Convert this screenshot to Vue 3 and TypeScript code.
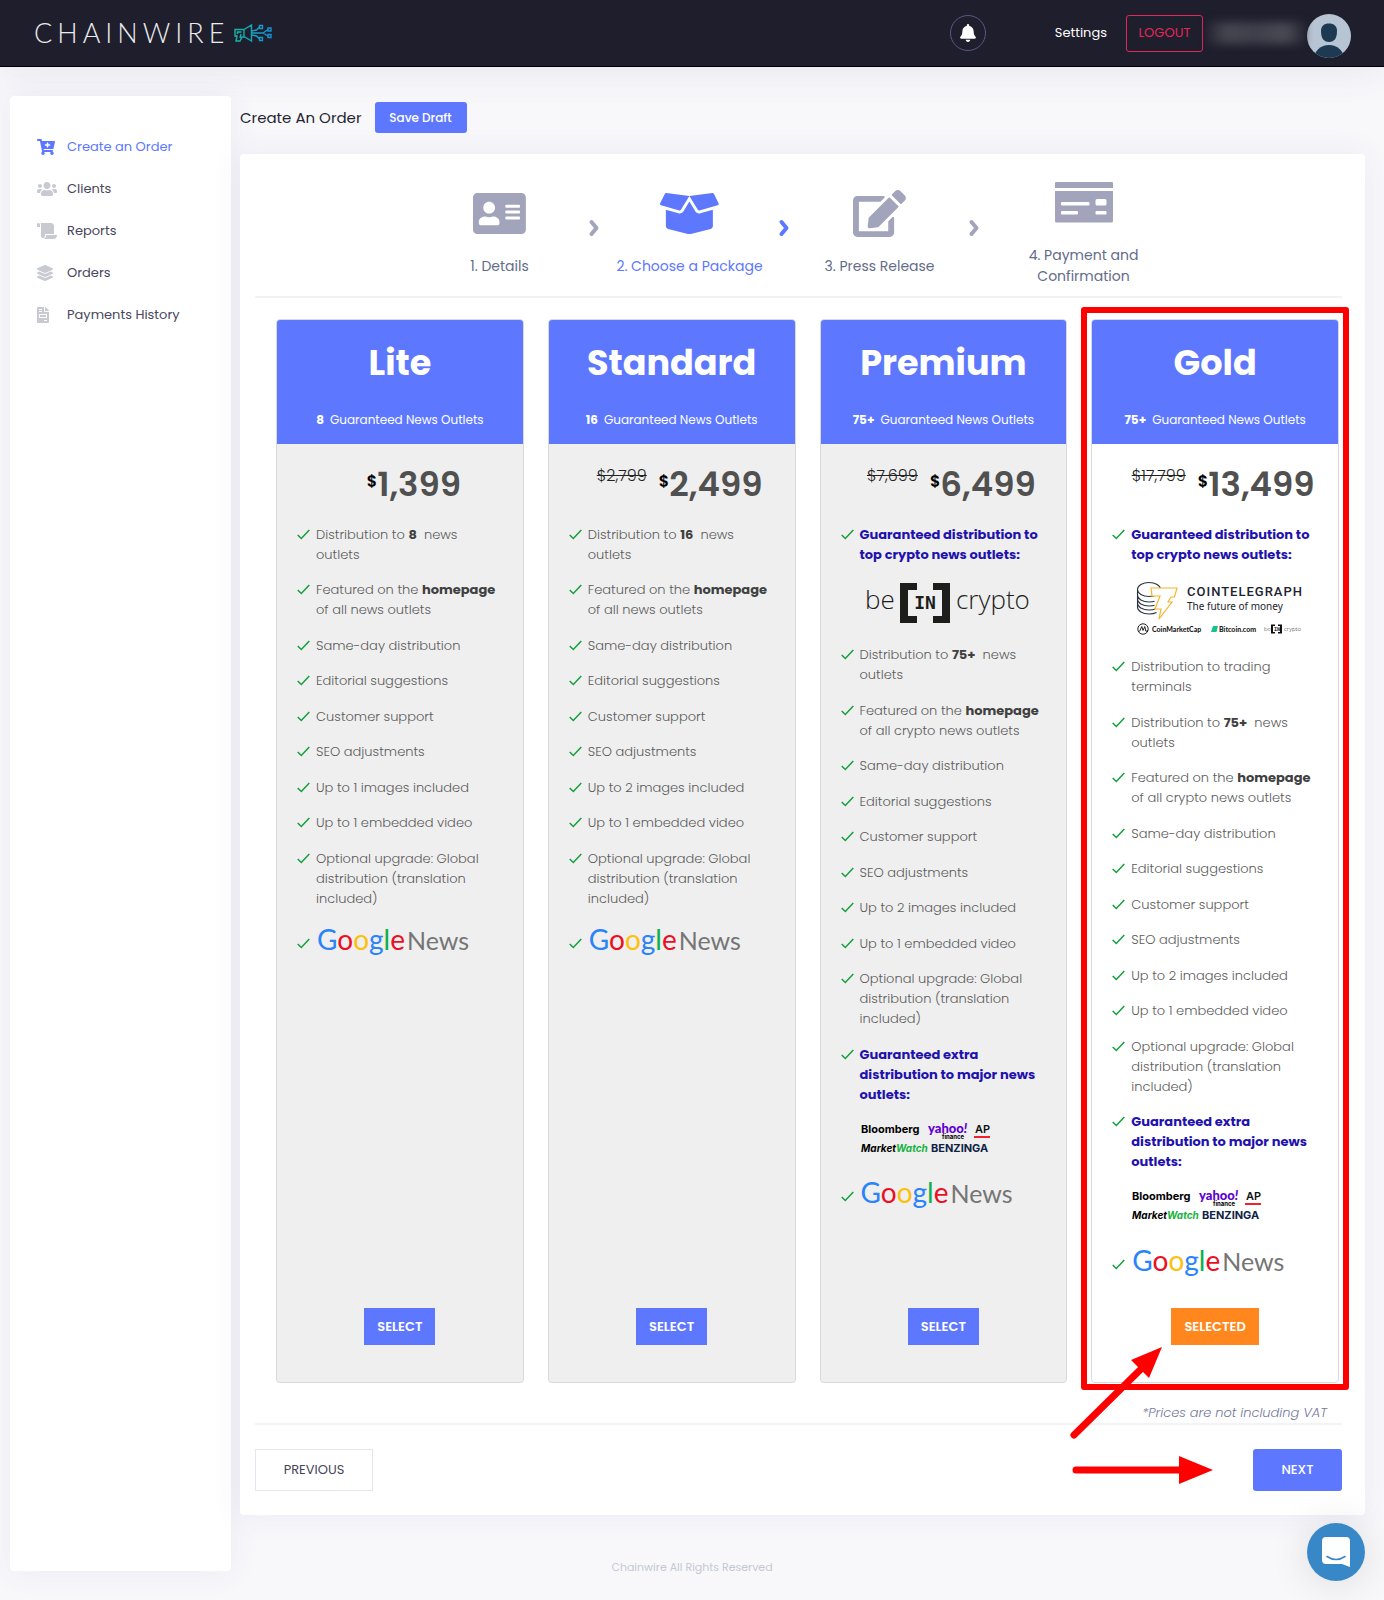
<script setup lang="ts">
interface Icon { w: number; h: number; d: string }
interface Segment { text: string; bold?: boolean }
interface Feature { text?: Segment[]; highlight?: boolean; logos?: 'bein' | 'crypto' | 'major' | 'google' }
interface Plan { name: string; outlets: string; old: string; price: string; selected?: boolean; features: Feature[] }

const menu: { label: string; active?: boolean; icon: Icon }[] = [
  { label: 'Create an Order', active: true, icon: { w: 576, h: 512, d: 'M504.717 320H211.572l6.545 32h268.418c15.401 0 26.816 14.301 23.403 29.319l-5.517 24.276C523.112 414.668 536 433.828 536 456c0 31.202-25.519 56.444-56.824 55.994-29.823-.429-54.35-24.631-55.155-54.447-.44-16.287 6.085-31.049 16.803-41.548H231.176C241.553 426.165 248 440.326 248 456c0 31.813-26.528 57.431-58.67 55.938-28.54-1.325-51.751-24.385-53.251-52.917-1.158-22.034 10.436-41.455 28.051-51.586L93.883 64H24C10.745 64 0 53.255 0 40V24C0 10.745 10.745 0 24 0h102.529c11.401 0 21.228 8.021 23.513 19.19L159.208 64H551.99c15.401 0 26.816 14.301 23.403 29.319l-47.273 208C525.637 312.246 515.923 320 504.717 320zM408 168h-48v-40c0-8.837-7.163-16-16-16h-16c-8.837 0-16 7.163-16 16v40h-48c-8.837 0-16 7.163-16 16v16c0 8.837 7.163 16 16 16h48v40c0 8.837 7.163 16 16 16h16c8.837 0 16-7.163 16-16v-40h48c8.837 0 16-7.163 16-16v-16c0-8.837-7.163-16-16-16z' } },
  { label: 'Clients', icon: { w: 640, h: 512, d: 'M96 224c35.3 0 64-28.7 64-64s-28.7-64-64-64-64 28.7-64 64 28.7 64 64 64zm448 0c35.3 0 64-28.7 64-64s-28.7-64-64-64-64 28.7-64 64 28.7 64 64 64zm32 32h-64c-17.6 0-33.5 7.1-45.1 18.6 40.3 22.1 68.9 62 75.1 109.4h66c17.7 0 32-14.3 32-32v-32c0-35.3-28.7-64-64-64zm-256 0c61.9 0 112-50.1 112-112S381.9 32 320 32 208 82.1 208 144s50.1 112 112 112zm76.8 32h-8.3c-20.8 10-43.9 16-68.5 16s-47.6-6-68.5-16h-8.3C179.6 288 128 339.6 128 403.2V432c0 26.5 21.5 48 48 48h288c26.5 0 48-21.5 48-48v-28.8c0-63.6-51.6-115.2-115.2-115.2zm-223.7-13.4C161.5 263.1 145.6 256 128 256H64c-35.3 0-64 28.7-64 64v32c0 17.7 14.3 32 32 32h65.9c6.3-47.4 34.9-87.3 75.2-109.4z' } },
  { label: 'Reports', icon: { w: 640, h: 512, d: 'M48 0C21.53 0 0 21.53 0 48v64c0 8.84 7.16 16 16 16h80V48C96 21.53 74.47 0 48 0zm208 412.57V352h288V96c0-52.94-43.06-96-96-96H111.59C121.74 13.41 128 29.92 128 48v368c0 38.87 34.65 69.65 74.75 63.12C234.22 474 256 444.46 256 412.57zM288 384v32c0 52.93-43.06 96-96 96h336c61.86 0 112-50.14 112-112 0-8.84-7.16-16-16-16H288z' } },
  { label: 'Orders', icon: { w: 512, h: 512, d: 'M12.41 148.02l232.94 105.67c6.8 3.09 14.49 3.09 21.29 0l232.94-105.67c16.55-7.51 16.55-32.52 0-40.03L266.65 2.31a25.607 25.607 0 0 0-21.29 0L12.41 107.98c-16.55 7.51-16.55 32.53 0 40.04zm487.18 88.28l-58.09-26.33-161.64 73.27c-7.56 3.43-15.59 5.17-23.86 5.17s-16.29-1.74-23.86-5.17L70.51 209.97l-58.1 26.33c-16.55 7.5-16.55 32.5 0 40l232.94 105.59c6.8 3.08 14.49 3.08 21.29 0L499.59 276.3c16.55-7.5 16.55-32.5 0-40zm0 127.8l-57.87-26.23-161.86 73.37c-7.56 3.43-15.59 5.17-23.86 5.17s-16.29-1.74-23.86-5.17L70.29 337.87 12.41 364.1c-16.55 7.5-16.55 32.5 0 40l232.94 105.59c6.8 3.08 14.49 3.08 21.29 0L499.59 404.1c16.55-7.5 16.55-32.5 0-40z' } },
  { label: 'Payments History', icon: { w: 384, h: 512, d: 'M288 256H96v64h192v-64zm89-151L279.1 7c-4.5-4.5-10.6-7-17-7H256v128h128v-6.1c0-6.3-2.5-12.4-7-16.9zm-153 31V0H24C10.7 0 0 10.7 0 24v464c0 13.3 10.7 24 24 24h336c13.3 0 24-10.7 24-24V160H248c-13.2 0-24-10.8-24-24zM64 72c0-4.42 3.58-8 8-8h80c4.42 0 8 3.58 8 8v16c0 4.42-3.58 8-8 8H72c-4.42 0-8-3.58-8-8V72zm0 64c0-4.42 3.58-8 8-8h80c4.42 0 8 3.58 8 8v16c0 4.42-3.58 8-8 8H72c-4.42 0-8-3.58-8-8v-16zm256 304c0 4.42-3.58 8-8 8h-80c-4.42 0-8-3.58-8-8v-16c0-4.42 3.58-8 8-8h80c4.42 0 8 3.58 8 8v16zm0-200v96c0 8.84-7.16 16-16 16H80c-8.84 0-16-7.16-16-16v-96c0-8.84 7.16-16 16-16h224c8.84 0 16 7.16 16 16z' } }
]

const steps: { label: string; active?: boolean; wide?: boolean; icon: Icon }[] = [
  { label: '1. Details', icon: { w: 576, h: 512, d: 'M528 32H48C21.5 32 0 53.5 0 80v352c0 26.5 21.5 48 48 48h480c26.5 0 48-21.5 48-48V80c0-26.5-21.5-48-48-48zm-352 96c35.3 0 64 28.7 64 64s-28.7 64-64 64-64-28.7-64-64 28.7-64 64-64zm112 236.8c0 10.6-10 19.2-22.4 19.2H86.4C74 384 64 375.4 64 364.8v-19.2c0-31.8 30.1-57.6 67.2-57.6h5c12.3 5.1 25.7 8 39.8 8s27.6-2.9 39.8-8h5c37.1 0 67.2 25.8 67.2 57.6v19.2zM512 312c0 4.4-3.6 8-8 8H360c-4.4 0-8-3.6-8-8v-16c0-4.4 3.6-8 8-8h144c4.4 0 8 3.6 8 8v16zm0-64c0 4.4-3.6 8-8 8H360c-4.4 0-8-3.6-8-8v-16c0-4.4 3.6-8 8-8h144c4.4 0 8 3.6 8 8v16zm0-64c0 4.4-3.6 8-8 8H360c-4.4 0-8-3.6-8-8v-16c0-4.4 3.6-8 8-8h144c4.4 0 8 3.6 8 8v16z' } },
  { label: '2. Choose a Package', active: true, icon: { w: 640, h: 512, d: 'M425.7 256c-16.9 0-32.8-9-41.4-23.4L320 126l-64.2 106.6c-8.7 14.5-24.6 23.5-41.5 23.5-4.5 0-9-.6-13.3-1.9L64 215v178c0 14.7 10 27.5 24.2 31l216.2 54.1c10.2 2.5 20.9 2.5 31 0L551.8 424c14.2-3.6 24.2-16.4 24.2-31V215l-137 39.1c-4.3 1.3-8.8 1.9-13.3 1.9zm212.6-112.2L586.8 41c-3.1-6.2-9.8-9.8-16.7-8.9L320 64l91.7 152.1c3.8 6.3 11.4 9.3 18.5 7.3l197.9-56.5c9.9-2.9 14.7-13.9 10.2-23.1zM53.2 41L1.7 143.8c-4.6 9.2.3 20.2 10.1 23l197.9 56.5c7.1 2 14.7-1 18.5-7.3L320 64 69.8 32.1c-6.9-.8-13.5 2.7-16.6 8.9z' } },
  { label: '3. Press Release', icon: { w: 576, h: 512, d: 'M402.6 83.2l90.2 90.2c3.8 3.8 3.8 10 0 13.8L274.4 405.6l-92.8 10.3c-12.4 1.4-22.9-9.1-21.5-21.5l10.3-92.8L388.8 83.2c3.8-3.8 10-3.8 13.8 0zm162-22.9l-48.8-48.8c-15.2-15.2-39.9-15.2-55.2 0l-35.4 35.4c-3.8 3.8-3.8 10 0 13.8l90.2 90.2c3.8 3.8 10 3.8 13.8 0l35.4-35.4c15.2-15.3 15.2-40 0-55.2zM384 346.2V448H64V128h229.8c3.2 0 6.2-1.3 8.5-3.5l40-40c7.6-7.6 2.2-20.5-8.5-20.5H48C21.5 64 0 85.5 0 112v352c0 26.5 21.5 48 48 48h352c26.5 0 48-21.5 48-48V306.2c0-10.7-12.9-16-20.5-8.5l-40 40c-2.2 2.3-3.5 5.3-3.5 8.5z' } },
  { label: '4. Payment and Confirmation', wide: true, icon: { w: 58, h: 47, d: 'M1 3h56q1 0 1 1v5H0V4q0-1 1-1zM0 12h58v30q0 1.500-1.500 1.500h-55Q0 43.500 0 42zM7 23q-1 0-1 1v1.500q0 1 1 1h26.500q1 0 1-1V24q0-1-1-1zM42 20q-1.500 0-1.500 1.500V25q0 1.500 1.500 1.500h8q1.500 0 1.500-1.500v-3.500q0-1.500-1.500-1.500zM7 32q-1 0-1 1v1.500q0 1 1 1h15q1 0 1-1V33q0-1-1-1zM41.500 32q-1 0-1 1v1.500q0 1 1 1h9q1 0 1-1V33q0-1-1-1z' } }
]

const line = (text: string): Feature => ({ text: [{ text }] })
const outlets = (count: string): Feature => ({ text: [{ text: 'Distribution to ' }, { text: count, bold: true }, { text: '\u00a0 news outlets' }] })
const homepage = (kind: string): Feature => ({ text: [{ text: 'Featured on the ' }, { text: 'homepage', bold: true }, { text: ` of all ${kind}news outlets` }] })
const services = (images: number): Feature[] => [
  line('Same-day distribution'),
  line('Editorial suggestions'),
  line('Customer support'),
  line('SEO adjustments'),
  line(`Up to ${images} images included`),
  line('Up to 1 embedded video'),
  line('Optional upgrade: Global distribution (translation included)')
]
const top = (logos: 'bein' | 'crypto'): Feature => ({ text: [{ text: 'Guaranteed distribution to top crypto news outlets:' }], highlight: true, logos })
const major: Feature = { text: [{ text: 'Guaranteed extra distribution to major news outlets:' }], highlight: true, logos: 'major' }
const google: Feature = { logos: 'google' }

const plans: Plan[] = [
  { name: 'Lite', outlets: '8', old: '', price: '1,399', features: [outlets('8'), homepage(''), ...services(1), google] },
  { name: 'Standard', outlets: '16', old: '$2,799', price: '2,499', features: [outlets('16'), homepage(''), ...services(2), google] },
  { name: 'Premium', outlets: '75+', old: '$7,699', price: '6,499', features: [top('bein'), outlets('75+'), homepage('crypto '), ...services(2), major, google] },
  { name: 'Gold', outlets: '75+', old: '$17,799', price: '13,499', selected: true, features: [top('crypto'), line('Distribution to trading terminals'), outlets('75+'), homepage('crypto '), ...services(2), major, google] }
]
</script>

<template>
  <div class="page">
    <header class="topbar">
      <a href="#" class="brand">
        <span class="wordmark">CHAINWIRE</span>
        <svg width="38" height="18" viewBox="0 0 38 18" fill="none" stroke="url(#brand)" stroke-width="1.400" aria-hidden="true">
          <defs><linearGradient id="brand" gradientUnits="userSpaceOnUse" x1="0" y1="0" x2="38" y2="4"><stop stop-color="#14b8a0" /><stop offset="1" stop-color="#1590d8" /></linearGradient></defs>
          <path d="M10 5.500H1V12h2l-1 5h4l2-4h2zM3.500 10V8h4M10 5.500 17.500 1v16L10 12.500M6 14l1-4M17.500 7l5-1 3-3M17.500 9H29l5-3.500M17.500 11l5 1 3 3M29 9l5 3" />
          <path d="M25.500 1.500h3v3h-3zM34 4h3v3h-3zM34 10.500h3v3h-3zM25.500 13.500h3v3h-3z" />
        </svg>
      </a>
      <nav class="account">
        <button class="bell" type="button" aria-label="Notifications">
          <svg width="16" height="18" viewBox="0 0 448 512" fill="#fff"><path d="M224 512c35.320 0 63.970-28.650 63.970-64H160.030c0 35.350 28.650 64 63.970 64zm215.390-149.710c-19.320-20.760-55.470-51.990-55.470-154.290 0-77.700-54.480-139.900-127.940-155.160V32c0-17.670-14.320-32-31.980-32s-31.980 14.330-31.980 32v20.840C118.560 68.100 64.080 130.300 64.080 208c0 102.300-36.150 133.530-55.470 154.290-6 6.450-8.660 14.160-8.610 21.710.11 16.400 12.980 32 32.100 32h383.800c19.120 0 32-15.600 32.100-32 .05-7.550-2.610-15.270-8.610-21.710z" /></svg>
        </button>
        <a href="#" class="settings">Settings</a>
        <button class="logout" type="button">LOGOUT</button>
        <span class="username"></span>
        <svg class="avatar" width="44" height="44" viewBox="0 0 44 44" aria-label="Profile">
          <defs><clipPath id="face"><circle cx="22" cy="22" r="22" /></clipPath></defs>
          <g clip-path="url(#face)"><rect width="44" height="44" fill="#b7c4d3" /><path d="M22 9.500c5 0 8 2.500 8 7.500 0 7-2.500 11-8 11s-8-4-8-11c0-5 3-7.500 8-7.500z" fill="#1d3a52" /><ellipse cx="22" cy="45" rx="15" ry="14" fill="#1d3a52" /></g>
        </svg>
      </nav>
    </header>

    <div class="body">
      <aside class="sidebar">
        <nav>
          <a v-for="item in menu" :key="item.label" href="#" class="menu-item" :class="{ active: item.active }">
            <span class="menu-icon"><svg height="16" :viewBox="`0 0 ${item.icon.w} ${item.icon.h}`" fill="currentColor" aria-hidden="true"><path :d="item.icon.d" /></svg></span>
            {{ item.label }}
          </a>
        </nav>
      </aside>

      <main class="main">
        <div class="title-row">
          <h1>Create An Order</h1>
          <button type="button" class="draft">Save Draft</button>
        </div>

        <section class="panel">
          <ol class="steps">
            <template v-for="(step, i) in steps" :key="step.label">
              <li class="step" :class="{ active: step.active, wide: step.wide }">
                <svg height="47" :viewBox="`0 0 ${step.icon.w} ${step.icon.h}`" fill="currentColor" fill-rule="evenodd" aria-hidden="true"><path :d="step.icon.d" /></svg>
                <span>{{ step.label }}</span>
              </li>
              <li v-if="i < 3" class="chevron" :class="{ active: step.active }" aria-hidden="true">
                <svg width="12" height="18" viewBox="0 0 12 18" fill="none" stroke="currentColor" stroke-width="4"><path d="M2.500 3l5 6-5 6" stroke-linecap="round" stroke-linejoin="round" /></svg>
              </li>
            </template>
          </ol>

          <div class="plans">
            <article v-for="plan in plans" :key="plan.name" class="plan" :class="{ selected: plan.selected }">
              <header class="plan-head">
                <h2>{{ plan.name }}</h2>
                <p><b>{{ plan.outlets }}</b>Guaranteed News Outlets</p>
              </header>
              <div class="price">
                <s>{{ plan.old }}</s>
                <span class="currency">$</span>
                <strong>{{ plan.price }}</strong>
              </div>
              <ul class="features">
                <li v-for="(feature, i) in plan.features" :key="i" :class="{ highlight: feature.highlight, google: feature.logos === 'google' }">
                  <svg class="tick" width="13" height="11" viewBox="0 0 13 11" fill="none" stroke="#12a03c" stroke-width="1.500" aria-hidden="true"><path d="M.7 6 4.300 9.500 12.300 1" /></svg>
                  <div class="feature">
                    <p v-if="feature.text"><template v-for="(part, j) in feature.text" :key="j"><b v-if="part.bold">{{ part.text }}</b><template v-else>{{ part.text }}</template></template></p>

                    <svg v-if="feature.logos === 'bein'" class="outlet-logos inset" width="166" height="42" viewBox="0 0 166 42">
                      <text x="-1" y="27" class="bein-text">be</text>
                      <path d="M34 1h17v7h-9v26h9v7H34zM84 1H67v7h9v26h-9v7h17z" fill="#1d1d1b" />
                      <text x="59" y="27" text-anchor="middle" class="in-text">IN</text>
                      <text x="90" y="27" class="bein-text">crypto</text>
                    </svg>

                    <svg v-if="feature.logos === 'crypto'" class="outlet-logos inset" width="166" height="54" viewBox="0 0 166 54">
                      <g fill="none" stroke="#2b3440" stroke-width="1.100">
                        <ellipse cx="12" cy="7.500" rx="11.500" ry="7" />
                        <path d="M.5 8v17c0 4 5 7 11.500 7 3 0 5.500-.5 7.500-1.500M.5 13c0 4 5 7 11.500 7 2 0 4 0 5.500-.7M.5 17c0 4 5 7 11.500 7 2 0 4 0 5.500-.7M.5 21c0 4 5 7 11.500 7 2 0 4.500 0 6-1" />
                      </g>
                      <path d="M14 6h26l-2.500 9H34l-3 5h4L22 37l2-10h-6l5-13h-8z" fill="#fff" stroke="#f7b52c" stroke-width="1.200" />
                      <text x="50" y="14" class="ct-name">COINTELEGRAPH</text>
                      <text x="50" y="28" class="ct-tag">The future of money</text>
                      <circle cx="6" cy="47" r="5.200" fill="none" stroke="#222" /><path d="M2.500 49.500 4.800 44.500 6 48.500 7.800 44.500 8.700 49q1.500 1 2-1" fill="none" stroke="#222" />
                      <text x="15" y="50" class="cmc">CoinMarketCap</text>
                      <path d="M76 44h5l-1.500 6H74z" fill="#13c38b" />
                      <text x="82" y="50" class="cmc">Bitcoin.com</text>
                      <text x="127" y="49" class="bein-small">be</text>
                      <path d="M134 42.500h4v1.500h-2v6h2v1.500h-4zM145 42.500h-4v1.500h2v6h-2v1.500h4z" fill="#111" />
                      <text x="140" y="49" text-anchor="middle" class="in-small">IN</text>
                      <text x="147" y="49" class="bein-small">crypto</text>
                    </svg>

                    <svg v-if="feature.logos === 'major'" class="outlet-logos" width="132" height="34" viewBox="0 0 132 34">
                      <text x="1" y="11" class="bloomberg">Bloomberg</text>
                      <text x="68" y="11" class="yahoo">yahoo<tspan font-style="italic">!</tspan></text>
                      <text x="82" y="17" class="finance">finance</text>
                      <text x="115" y="11" class="ap">AP</text>
                      <path d="M114 14h16v2h-16z" fill="#f0202c" />
                      <text x="1" y="30" class="marketwatch">Market<tspan fill="#16b33e">Watch</tspan></text>
                      <text x="71" y="30" class="benzinga">BENZINGA</text>
                    </svg>

                    <div v-if="feature.logos === 'google'" class="google-news"><span><span class="g-blue">G</span><span class="g-red">o</span><span class="g-yellow">o</span><span class="g-blue">g</span><span class="g-green">l</span><span class="g-red">e</span></span><span class="news">News</span></div>
                  </div>
                </li>
              </ul>
              <button type="button" class="select">{{ plan.selected ? 'SELECTED' : 'SELECT' }}</button>
              <span v-if="plan.selected" class="frame"></span>
            </article>
          </div>

          <p class="vat">*Prices are not including VAT</p>
          <div class="actions">
            <button type="button" class="previous">PREVIOUS</button>
            <button type="button" class="next">NEXT</button>
          </div>

          <svg class="arrows" width="146" height="144" viewBox="0 0 146 144" fill="#f00" stroke="#f00" aria-hidden="true">
            <path d="M6 91 72 26M8 126h105" stroke-width="7" stroke-linecap="round" />
            <path d="M94 3 63 16l18 18zM111 112v28l34-14z" stroke="none" />
          </svg>
        </section>
      </main>

      <footer class="footer">Chainwire All Rights Reserved</footer>
    </div>

    <button type="button" class="chat" aria-label="Open chat">
      <svg width="28" height="32" viewBox="0 0 28 32"><path d="M4 1h20q4 0 4 4v26l-8-3H4q-4 0-4-4V5q0-4 4-4z" fill="#fff" /><path d="M5 20.500q9 6 18 0" fill="none" stroke="#3888c8" stroke-width="1.600" stroke-linecap="round" /></svg>
    </button>
  </div>
</template>

<style>
body { background: #f8f8fb; }
</style>

<style scoped>
.page { font-family: Poppins, Inter, sans-serif; font-size: 14px; color: #646c9a; }
.page * { box-sizing: border-box; }
button { font-family: inherit; cursor: pointer; padding: 0; border: 0; }
a { text-decoration: none; }
h1, h2, p, ul, ol { margin: 0; padding: 0; }
ul, ol { list-style: none; }
svg { display: block; flex: none; overflow: visible; }

.topbar { display: flex; align-items: center; justify-content: space-between; height: 67px; padding: 0 33px 0 34px; background: #1e1e2d; border-bottom: 1px solid #000; box-shadow: 0 0 40px rgba(82, 63, 105, 0.12); }
.brand { display: flex; align-items: center; gap: 5px; color: #ececec; }
.wordmark { font-family: Lato, sans-serif; font-weight: 300; font-size: 27px; line-height: 32px; letter-spacing: 5px; }
.account { display: flex; align-items: center; }
.bell { display: flex; align-items: center; justify-content: center; width: 36px; height: 36px; border: 1px solid #555a8c; border-radius: 50%; background: transparent; }
.settings { margin: 0 19px 0 69px; color: #fff; font-size: 13px; }
.logout { width: 77px; height: 37px; border: 1px solid #e0285a; border-radius: 3px; background: transparent; color: #e0285a; font-size: 13px; }
.username { width: 96px; height: 22px; margin: 0 3px 0 5px; background: linear-gradient(90deg, #2a2a37, #464651 20%, #3f3f4b 50%, #4a4a55 80%, #2a2a37); filter: blur(4px); }
.avatar { margin-top: 5px; }

.body { display: grid; grid-template-columns: 221px minmax(0, 1fr); column-gap: 9px; padding: 29px 19px 25px 10px; }
.sidebar { grid-column: 1; grid-row: 1 / 3; margin-bottom: 4px; padding: 30px 0 0 27px; background: #fff; border-radius: 4px; box-shadow: 0 0 30px rgba(82, 63, 145, 0.08); }
.menu-item { display: flex; align-items: center; gap: 10px; height: 42px; color: #48465b; font-size: 13px; }
.menu-icon { width: 20px; color: #c8cad1; }
.menu-item.active, .menu-item.active .menu-icon { color: #5d78ff; }
.main { grid-column: 2; grid-row: 1; }
.title-row { display: flex; align-items: center; gap: 13px; padding: 6px 0 21px; }
h1 { color: #25252f; font-size: 15px; line-height: 24px; font-weight: 400; }
.draft { width: 92px; height: 31px; border-radius: 3px; background: #5d78ff; color: #fff; font-size: 12px; font-weight: 500; }
.panel { position: relative; padding: 25px 23px 24px 15px; background: #fff; border-radius: 4px; box-shadow: 0 0 30px rgba(82, 63, 145, 0.08); }

.steps { display: flex; align-items: center; justify-content: center; padding-bottom: 9px; border-bottom: 2px solid #f3f3f7; }
.step { display: flex; flex-direction: column; align-items: center; gap: 19px; width: 150px; color: #646c8a; font-size: 14px; line-height: 21px; text-align: center; }
.step.wide { width: 178px; padding: 0 30px; }
.step svg { color: #a1a4bb; }
.chevron { display: flex; justify-content: center; width: 40px; margin-bottom: 11px; color: #a1a4bb; }
.step.active, .step.active svg, .chevron.active { color: #5d78ff; }

.plans { display: grid; grid-template-columns: repeat(4, minmax(0, 1fr)); gap: 24px; padding: 21px 3px 0 21px; }
.plan { position: relative; display: flex; flex-direction: column; align-items: center; padding-bottom: 37px; border: 1px solid #d9d9d9; border-radius: 4px; background: #efefef; }
.plan.selected { background: #fff; }
.plan-head { align-self: stretch; height: 124px; padding-top: 19px; border-radius: 3px 3px 0 0; background: #5d78ff; color: #fff; text-align: center; }
h2 { font-size: 35px; line-height: 48px; font-weight: 700; }
.plan-head p { margin-top: 23px; font-size: 12px; line-height: 20px; font-weight: 400; }
.plan-head b { margin-right: 6px; font-weight: 700; }
.price { display: flex; height: 81px; padding: 16px 0 0 16px; }
.price s { padding-top: 6px; color: #222; font-size: 16px; line-height: 20px; font-weight: 300; }
.currency { margin-left: 12px; padding-top: 12px; color: #000; font-size: 16px; line-height: 20px; font-weight: 600; }
.price strong { color: #505050; font-size: 34px; line-height: 48px; font-weight: 600; }

.features { align-self: stretch; padding: 0 25px 0 20px; }
.features li { display: flex; gap: 6px; margin-bottom: 15px; color: #5c5c5c; font-size: 13px; font-weight: 300; line-height: 20px; }
.features li:nth-child(even) { margin-bottom: 16px; }
.features b { color: #404040; font-weight: 700; }
.features .highlight { color: #1f12ae; font-weight: 700; }
.tick { margin-top: 4px; }
.feature { min-width: 0; }
.inset { margin: 16px 0 6px 6px; }
.outlet-logos { margin-top: 17px; margin-bottom: 6px; }
.google .tick { margin-top: 14px; }
.google-news { display: flex; align-items: baseline; gap: 2px; padding: 0 0 2px 1px; font-family: Lato, sans-serif; font-size: 28px; line-height: 30px; font-weight: 400; }
.news { color: #757575; font-size: 25px; }
.g-blue { color: #2a83fb; }
.g-red { color: #ea0f24; }
.g-yellow { color: #fcc00d; }
.g-green { color: #0db04b; }

.bein-text { font: 300 26px "Open Sans", sans-serif; fill: #1d1d1b; }
.in-text { font: 700 18px "DejaVu Sans Mono", monospace; fill: #1d1d1b; }
.bein-small { font: 300 6px "Open Sans", sans-serif; fill: #222; }
.in-small { font: 700 5px "DejaVu Sans Mono", monospace; fill: #111; }
.ct-name { font: 500 13px Roboto, sans-serif; letter-spacing: 1px; fill: #1b2430; }
.ct-tag { font: 400 10px "Noto Sans", sans-serif; fill: #1b2430; }
.cmc { font: 900 7px Lato, sans-serif; fill: #222; }
.bloomberg { font: 700 11px Inter, sans-serif; fill: #000; }
.yahoo { font: 900 13px Lato, sans-serif; fill: #5f01d2; }
.finance { font: 700 6px Inter, sans-serif; fill: #000; }
.ap { font: 600 11px Inter, sans-serif; fill: #111; }
.marketwatch { font: italic 700 10px Inter, sans-serif; fill: #000; }
.benzinga { font: 700 11px Inter, sans-serif; fill: #0f2345; }

.select { height: 37px; margin-top: auto; padding: 0 13px; background: #5d78ff; color: #fff; font-size: 13px; font-weight: 600; }
.plan.selected .select { background: #ff871d; }
.plan.selected .features { margin-bottom: 15px; }
.frame { position: absolute; inset: -13px -11px -8px -11px; border: 6px solid #f00; border-radius: 3px; pointer-events: none; }

.vat { padding: 20px 15px 0 0; border-bottom: 2px solid #f3f3f7; color: #74789c; font-size: 13px; line-height: 20px; font-style: italic; font-weight: 300; text-align: right; }
.actions { display: flex; justify-content: space-between; padding-top: 24px; }
.previous { width: 118px; height: 42px; border: 1px solid #e4e6ef; background: #fff; color: #48465b; font-size: 13px; }
.next { width: 89px; height: 42px; border-radius: 3px; background: #5d78ff; color: #fff; font-size: 13px; font-weight: 500; }
.arrows { position: absolute; right: 151px; bottom: 27px; pointer-events: none; }
.footer { grid-column: 1 / 3; grid-row: 2; padding: 44px 0 0 9px; color: #c5c8d4; font-size: 11px; line-height: 16px; text-align: center; }
.chat { position: fixed; right: 19px; bottom: 19px; display: flex; align-items: center; justify-content: center; width: 58px; height: 58px; border-radius: 50%; background: #3888c8; box-shadow: 0 2px 40px rgba(0, 0, 0, 0.12); }
</style>
